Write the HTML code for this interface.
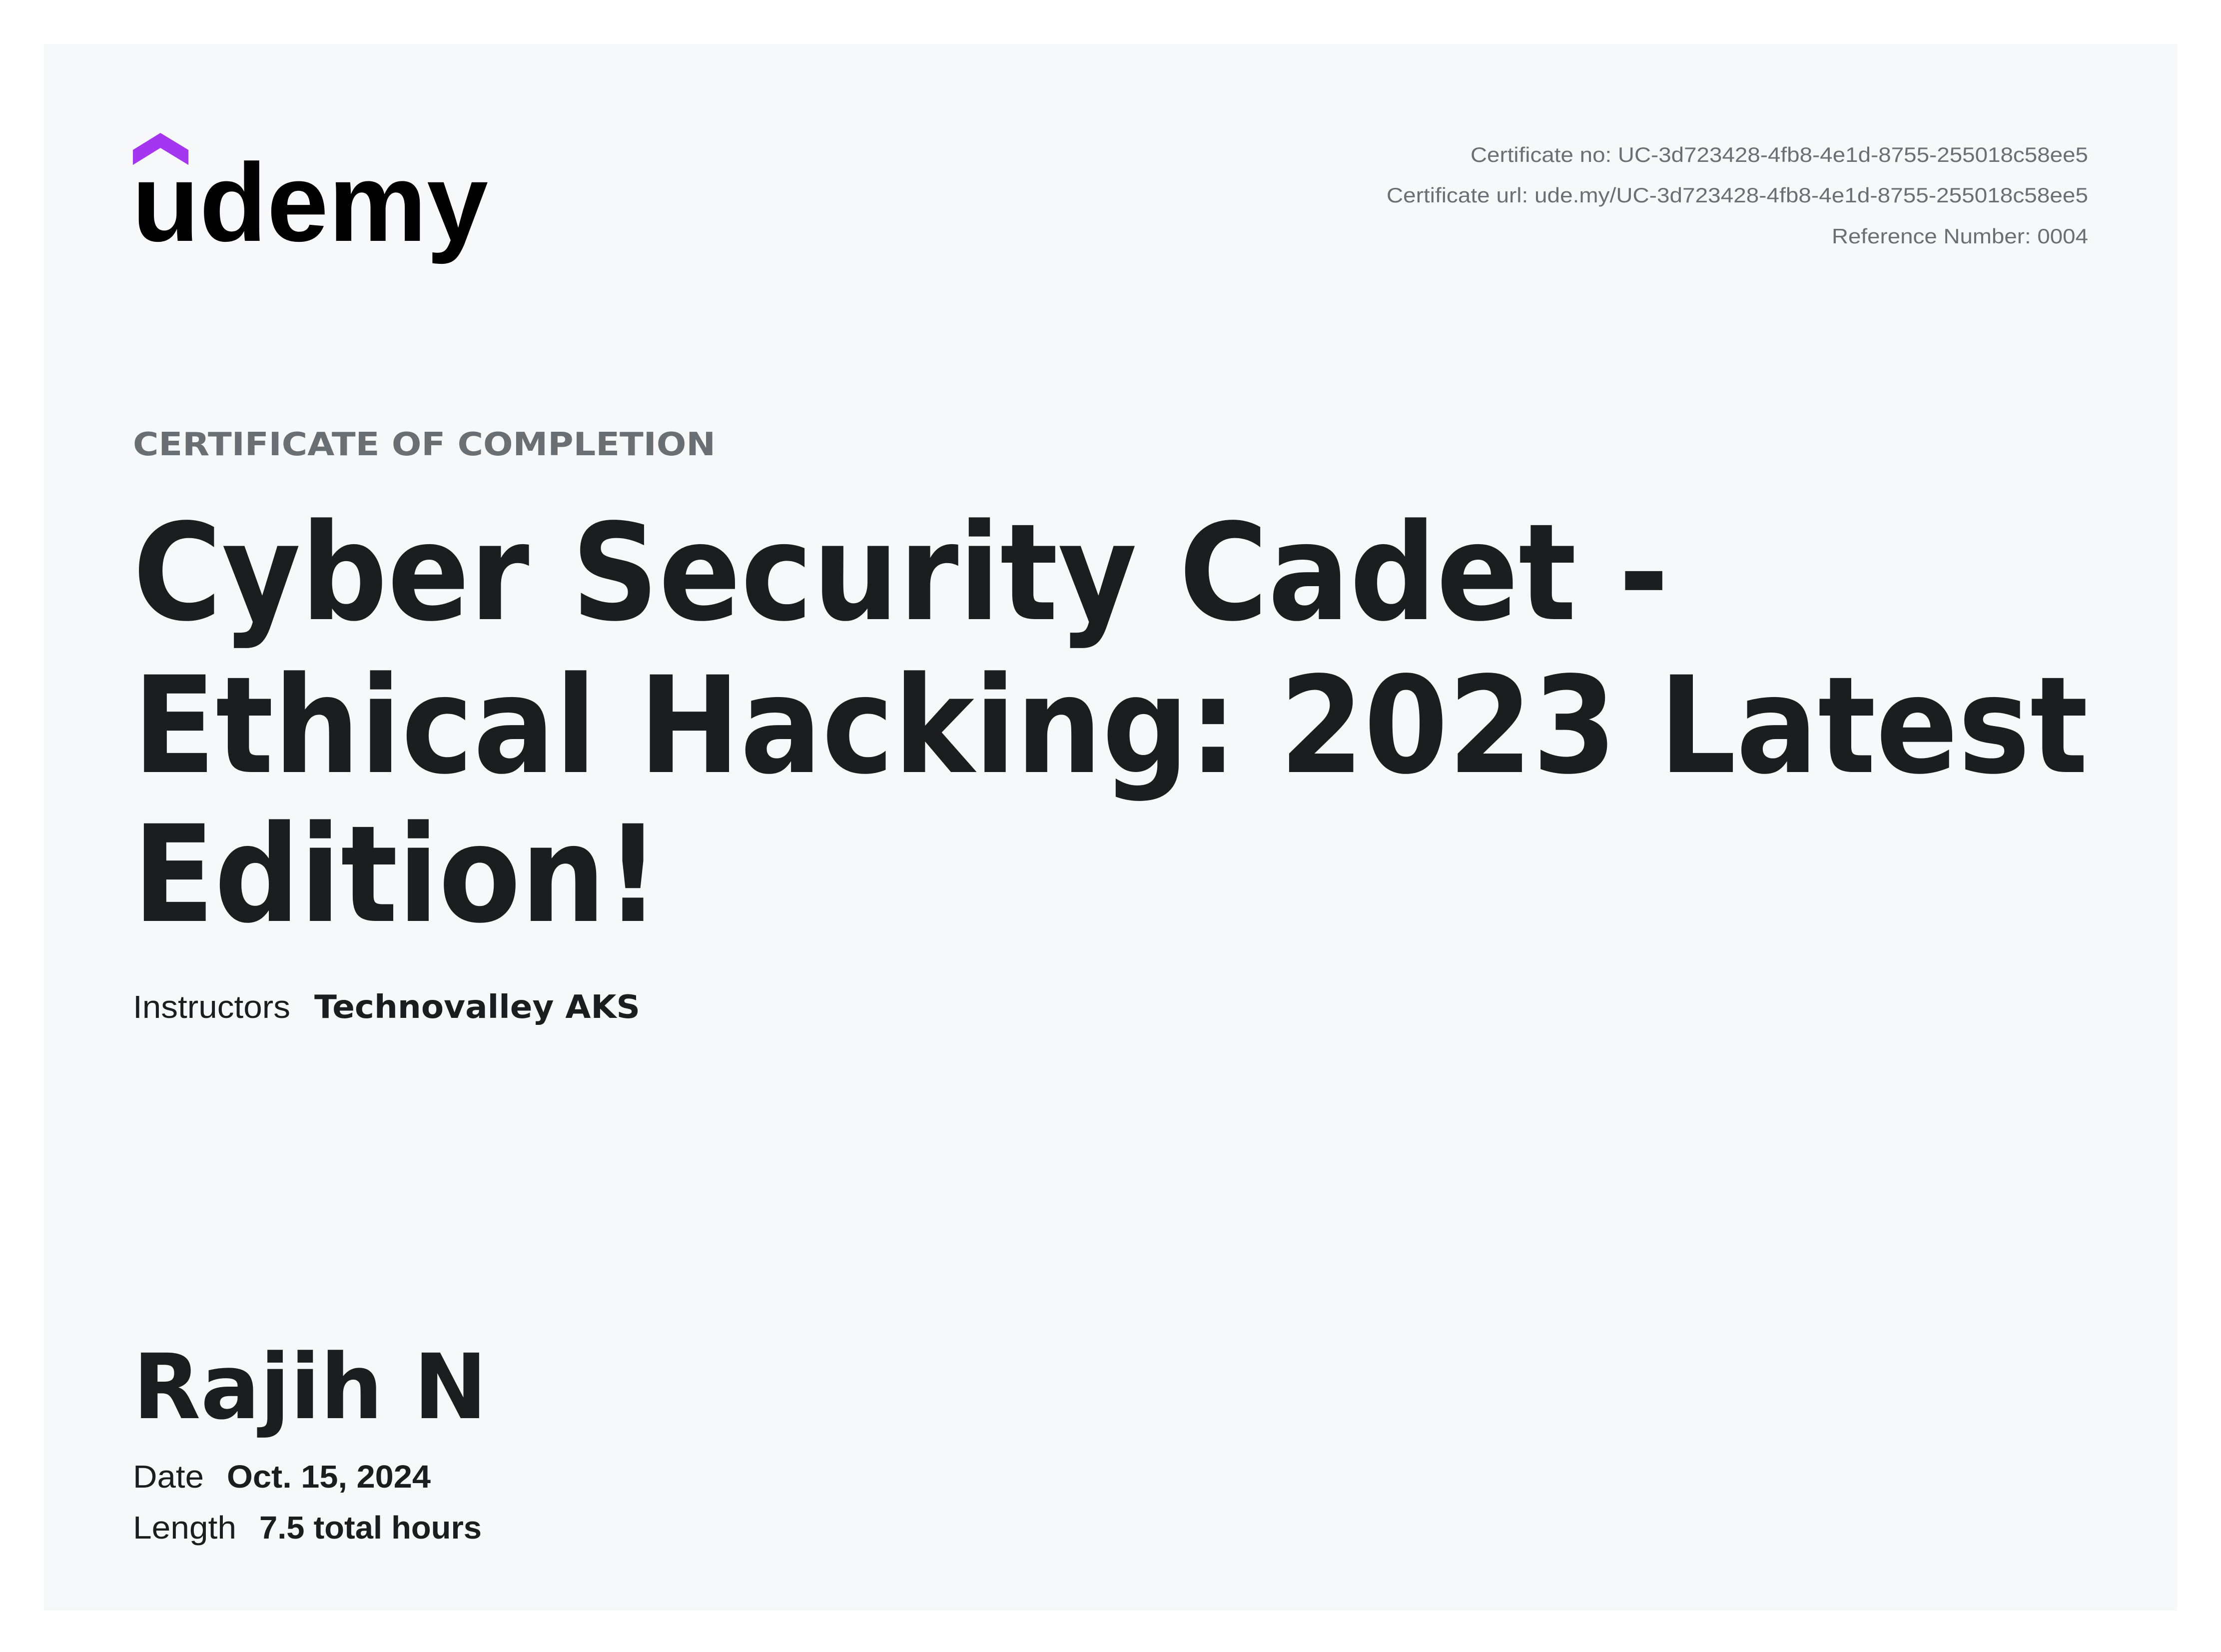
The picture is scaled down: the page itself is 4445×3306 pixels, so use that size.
<!DOCTYPE html>
<html><head><meta charset="utf-8"><style>
html,body{margin:0;padding:0;background:#fff;}
svg{display:block;}
</style></head><body>
<svg width="4445" height="3306" viewBox="0 0 4445 3306" xmlns="http://www.w3.org/2000/svg">
<rect x="0" y="0" width="4445" height="3306" fill="#ffffff"/>
<rect x="88" y="88" width="4269" height="3135" fill="#f7f8fa"/>
<polygon points="266,300 321,266 377,300 377,330 321,296 266,330" fill="#a435f0"/>
<text x="264" y="482" font-family="Liberation Sans, sans-serif" font-weight="bold" font-size="222" fill="#000" textLength="713" lengthAdjust="spacingAndGlyphs">udemy</text>
<g font-family="Liberation Sans, sans-serif" font-size="42" fill="#6a6f73" lengthAdjust="spacingAndGlyphs">
<text x="2943" y="324" textLength="1236" lengthAdjust="spacingAndGlyphs">Certificate no: UC-3d723428-4fb8-4e1d-8755-255018c58ee5</text>
<text x="2775" y="405" textLength="1404" lengthAdjust="spacingAndGlyphs">Certificate url: ude.my/UC-3d723428-4fb8-4e1d-8755-255018c58ee5</text>
<text x="3666" y="487" textLength="513" lengthAdjust="spacingAndGlyphs">Reference Number: 0004</text>
</g>
<text x="266" y="911" font-family="DejaVu Sans, sans-serif" font-weight="bold" font-size="64" fill="#6a6f73" textLength="1166" lengthAdjust="spacingAndGlyphs">CERTIFICATE OF COMPLETION</text>
<g font-family="DejaVu Sans, sans-serif" font-weight="bold" font-size="268" fill="#1c1d1f">
<text x="266" y="1239" textLength="3074" lengthAdjust="spacingAndGlyphs">Cyber Security Cadet -</text>
<text x="266" y="1545" textLength="3913" lengthAdjust="spacingAndGlyphs">Ethical Hacking: 2023 Latest</text>
<text x="266" y="1843" textLength="1055" lengthAdjust="spacingAndGlyphs">Edition!</text>
</g>
<text x="266" y="2037" font-family="Liberation Sans, sans-serif" font-size="64" fill="#1c1d1f" textLength="315" lengthAdjust="spacingAndGlyphs">Instructors</text>
<text x="629" y="2037" font-family="DejaVu Sans, sans-serif" font-weight="bold" font-size="64" fill="#1c1d1f" textLength="652" lengthAdjust="spacingAndGlyphs">Technovalley AKS</text>
<text x="266" y="2838" font-family="DejaVu Sans, sans-serif" font-weight="bold" font-size="180" fill="#1c1d1f" textLength="709" lengthAdjust="spacingAndGlyphs">Rajih N</text>
<text x="266" y="2977" font-family="Liberation Sans, sans-serif" font-size="64" fill="#1c1d1f" textLength="142" lengthAdjust="spacingAndGlyphs">Date</text>
<text x="454" y="2977" font-family="Liberation Sans, sans-serif" font-weight="bold" font-size="64" fill="#1c1d1f" textLength="408" lengthAdjust="spacingAndGlyphs">Oct. 15, 2024</text>
<text x="266" y="3079" font-family="Liberation Sans, sans-serif" font-size="64" fill="#1c1d1f" textLength="207" lengthAdjust="spacingAndGlyphs">Length</text>
<text x="519" y="3079" font-family="Liberation Sans, sans-serif" font-weight="bold" font-size="64" fill="#1c1d1f" textLength="445" lengthAdjust="spacingAndGlyphs">7.5 total hours</text>
</svg>
</body></html>
